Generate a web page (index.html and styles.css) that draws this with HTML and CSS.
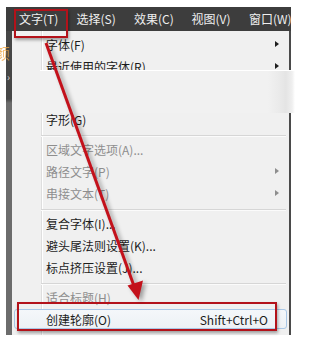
FILE: index.html
```html
<!DOCTYPE html>
<html lang="zh">
<head>
<meta charset="utf-8">
<link rel="stylesheet" href="styles.css">
</head>
<body>
<div class="stage">
  <div class="menubar">
    <span class="mb-item">文字(T)</span>
    <span class="mb-item">选择(S)</span>
    <span class="mb-item">效果(C)</span>
    <span class="mb-item">视图(V)</span>
    <span class="mb-item">窗口(W)</span>
  </div>
  <div class="main">
    <div class="strip"><span class="chev">›</span></div>
    <div class="menu">
      <div class="item"><span>字体(F)</span><i class="sub"></i></div>
      <div class="item"><span>最近使用的字体(R)</span><i class="sub"></i></div>
      <div class="hidden-area"></div>
      <div class="item"><span>字形(G)</span></div>
      <div class="sep"></div>
      <div class="item off"><span>区域文字选项(A)...</span></div>
      <div class="item off"><span>路径文字(P)</span><i class="sub"></i></div>
      <div class="item off"><span>串接文本(T)</span><i class="sub"></i></div>
      <div class="sep"></div>
      <div class="item"><span>复合字体(I)...</span></div>
      <div class="item"><span>避头尾法则设置(K)...</span></div>
      <div class="item"><span>标点挤压设置(J)...</span></div>
      <div class="sep"></div>
      <div class="item off"><span>适合标题(H)</span></div>
      <div class="item hl"><span>创建轮廓(O)</span><span class="key">Shift+Ctrl+O</span></div>
    </div>
  </div>

  <span class="orange">颜</span>
  <div class="patch"></div>
  <div class="redbox top"></div>
  <div class="redbox bottom"></div>
  <svg class="arrow" width="309" height="345" viewBox="0 0 309 345">
    <g class="arrow-g">
      <line x1="46" y1="43" x2="134" y2="286" stroke="#c3111b" stroke-width="3"/>
      <polygon points="127.5,285.5 143,280.5 138.5,300" fill="#c3111b"/>
    </g>
  </svg>
</div>
</body>
</html>
```

FILE: styles.css
```css
* { box-sizing: border-box; }
html, body { margin: 0; padding: 0; background: #fff; }
body {
  font-family: "Noto Sans CJK SC", "Noto Sans", "Liberation Sans", sans-serif;
  font-size: 12px;
}
.stage {
  position: relative;
  width: 309px;
  height: 345px;
  overflow: hidden;
  padding: 7px 0 0 6px;
}
.menubar {
  width: 285px;
  height: 24px;
  background: #3d3d3d;
  color: #efefef;
  display: flex;
  align-items: center;
  padding-left: 13px;
  overflow: hidden;
  white-space: nowrap;
}
.mb-item {
  flex: 0 0 57.5px;
  line-height: 24px;
}
.main {
  display: flex;
  height: 304px;
}
.strip {
  width: 6px;
  background: linear-gradient(to bottom, #464646 0, #464646 68px, #6c6c6c 72px, #6c6c6c 100%);
  position: relative;
}
.chev {
  position: absolute;
  left: 1px;
  top: 41px;
  color: #ddd;
  font-size: 10px;
  line-height: 10px;
}
.menu {
  width: 279px;
  border-right: 2px solid #4a4a4a;
  padding-top: 2px;
  background:
    linear-gradient(to right, transparent 29px, #dedede 29px, #dedede 30px, #fff 30px, #fff 31px, transparent 31px),
    #f0f0f0;
  display: flex;
  flex-direction: column;
}
.item {
  height: 22px;
  display: flex;
  align-items: center;
  justify-content: space-between;
  padding: 0 10px 0 34px;
  color: #1c1c1c;
  white-space: nowrap;
}
.item.off { color: #8e8e8e; }
.sub {
  width: 0;
  height: 0;
  border-left: 4px solid #1e1e1e;
  border-top: 3.5px solid transparent;
  border-bottom: 3.5px solid transparent;
}
.off .sub { border-left-color: #8e8e8e; }
.hidden-area { height: 31px; }
.sep {
  height: 2px;
  margin: 5px 3px 1px 29px;
  border-top: 1px solid #d6d6d6;
  border-bottom: 1px solid #fbfbfb;
}
.item.hl {
  height: 20px;
  margin: 1px 2px;
  padding: 0 18px 0 31px;
  border: 1px solid #a9c7e6;
  border-radius: 3px;
  background: linear-gradient(to bottom, #f4f7fa, #edf1f5);
}
.key { color: #1c1c1c; }
.orange {
  position: absolute;
  left: -5px;
  top: 45px;
  font-size: 15px;
  line-height: 16px;
  color: #f0a43c;
  opacity: 0.75;
}
.patch {
  position: absolute;
  left: 40px;
  top: 70px;
  width: 255px;
  height: 43px;
  border-top: 1px solid #ffffff;
  background:
    linear-gradient(to right, #f1f1f1 0, #f1f1f1 228px, #ebebeb 238px, #e4e4e4 246px, #efefef 252px, rgba(255,255,255,0.6) 255px);
}
.redbox {
  position: absolute;
  border: 2px solid #b3121a;
  box-shadow: 1px 2px 3px rgba(0, 0, 0, 0.35);
}
.redbox.top {
  left: 14px;
  top: 9px;
  width: 54px;
  height: 29px;
}
.redbox.bottom {
  left: 17px;
  top: 302px;
  width: 260px;
  height: 29px;
}
.arrow {
  position: absolute;
  left: 0;
  top: 0;
  pointer-events: none;
}
.arrow-g {
  filter: drop-shadow(3px 2px 2px rgba(0, 0, 0, 0.35));
}
```
